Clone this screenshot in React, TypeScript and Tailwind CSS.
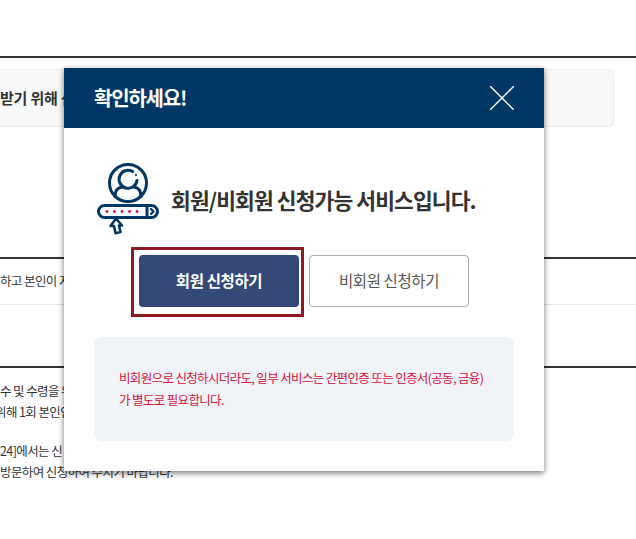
import React from "react";

const font = { fontFamily: '"Noto Sans CJK KR", "Noto Sans", sans-serif' };

const MemberIcon = () => (
  <svg width="62" height="72" viewBox="0 0 62 72" fill="none" stroke="#003764" strokeWidth="3" strokeLinecap="round" strokeLinejoin="round">
    <circle cx="31" cy="20" r="18.5" />
    {/* head, open at the upper right */}
    <path d="M35.5 8.4A9 9 0 1 0 40 17.5" />
    <circle cx="39" cy="12" r="1.1" fill="#003764" stroke="none" />
    {/* shoulders */}
    <path d="M18 33.5c0-6 3-9 7.5-9.5M44 33.5c0-6-3-9-7.5-9.5" />
    <rect x="1.5" y="42.5" width="59" height="12" rx="6" />
    <path d="M50 43v11" />
    <path d="M54 46l2.5 2.5-2.5 2.5" strokeWidth="2.4" />
    <g fill="#d6103f" stroke="none">
      <circle cx="10" cy="48.5" r="1.4" />
      <circle cx="17.5" cy="48.5" r="1.4" />
      <circle cx="25" cy="48.5" r="1.4" />
      <circle cx="32.5" cy="48.5" r="1.4" />
      <circle cx="40" cy="48.5" r="1.4" />
    </g>
    <path d="M19 55.5l6 7h-3l1.5 6.5-5 1.2-1.5-7.2h-3.5z" fill="#fff" strokeWidth="2.6" />
  </svg>
);

export default function App() {
  return (
    <div className="relative w-[636px] h-[539px] overflow-hidden bg-white text-[#333]" style={font}>
      {/* page behind the dialog */}
      <div className="pt-[56px]">
        <div className="h-[2px] bg-[#333]" />
        <div className="mt-[11px] w-[614px] h-[58px] flex items-center rounded-r-md border border-l-0 border-[#e9ecef] bg-[#f8f9fb] text-[15px] font-bold tracking-[-0.2px] whitespace-nowrap">
          받기 위해 신
        </div>
        <div className="mt-[130px] h-[2px] bg-[#333]" />
        <div className="h-[46px] flex items-center border-b border-[#e5e5e5] text-[12.5px] tracking-[-0.6px] whitespace-nowrap">
          하고 본인이 지
        </div>
        <div className="mt-[61px] h-[2px] bg-[#333]" />
        <div className="mt-[12px] text-[12.5px] leading-[21px] tracking-[-0.6px] whitespace-nowrap">
          <p>수 및 수령을 위</p>
          <p className="-ml-[5px]">위해 1회 본인인</p>
          <p className="mt-[18px]">24]에서는 신</p>
          <p>방문하여 신청하여 주시기 바랍니다.</p>
        </div>
      </div>

      {/* dialog */}
      <div className="absolute left-[64px] top-[68px] w-[480px] h-[403px] bg-white shadow-[0_2px_6px_rgba(0,0,0,0.55)]">
        <div className="h-[60px] flex items-center justify-between bg-[#003764] pl-[30px] pr-[30px]">
          <h2 className="text-[20px] font-bold tracking-[-1.2px] text-white">확인하세요!</h2>
          <svg width="24" height="24" viewBox="0 0 24 24" stroke="#fff" strokeWidth="1.4">
            <path d="M0 0l24 24M24 0L0 24" />
          </svg>
        </div>

        <div className="pl-[33px] pt-[35px] flex items-center gap-[12px]">
          <MemberIcon />
          <p className="mt-[2px] text-[21.5px] font-bold tracking-[-0.9px] text-[#333]">회원/비회원 신청가능 서비스입니다.</p>
        </div>

        <div className="mt-[20px] ml-[75px] flex gap-[10px]">
          <div className="relative">
            <button className="w-[160px] h-[52px] rounded bg-[#34497a] text-[15.5px] font-bold tracking-[-0.4px] text-white">
              회원 신청하기
            </button>
            <div className="absolute -left-[8px] -top-[8px] w-[173px] h-[70px] border-[3px] border-[#8f1a1e]" />
          </div>
          <button className="w-[160px] h-[52px] rounded border border-[#aaa] bg-white text-[15.5px] tracking-[-0.4px] text-[#555]">
            비회원 신청하기
          </button>
        </div>

        <div className="mt-[30px] mx-[30px] h-[104px] flex flex-col justify-center rounded-lg bg-[#f0f4f8] px-[25px] text-[12.5px] leading-[22px] tracking-[-0.65px] text-[#d6103f]">
          <p className="whitespace-nowrap">비회원으로 신청하시더라도, 일부 서비스는 간편인증 또는 인증서(공동, 금융)</p>
          <p>가 별도로 필요합니다.</p>
        </div>
      </div>
    </div>
  );
}
